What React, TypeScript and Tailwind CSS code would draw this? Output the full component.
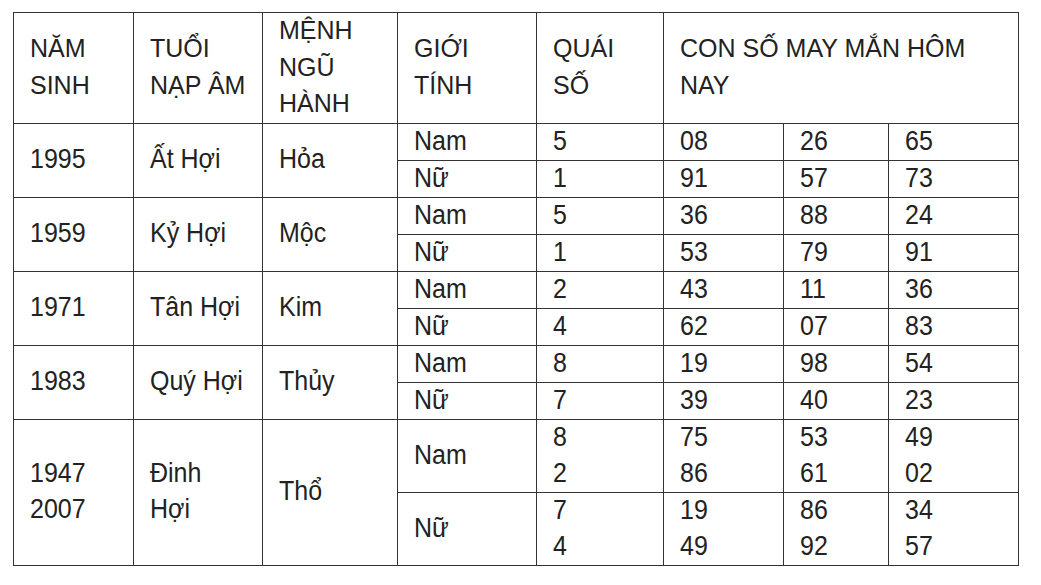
import type { ReactNode } from "react";

type Row = { gender: string; quai: string[]; nums: string[][] };
type Group = { year: string[]; tuoi: string[]; menh: string; rows: Row[] };

const groups: Group[] = [
  {
    year: ["1995"],
    tuoi: ["Ất Hợi"],
    menh: "Hỏa",
    rows: [
      { gender: "Nam", quai: ["5"], nums: [["08", "26", "65"]] },
      { gender: "Nữ", quai: ["1"], nums: [["91", "57", "73"]] },
    ],
  },
  {
    year: ["1959"],
    tuoi: ["Kỷ Hợi"],
    menh: "Mộc",
    rows: [
      { gender: "Nam", quai: ["5"], nums: [["36", "88", "24"]] },
      { gender: "Nữ", quai: ["1"], nums: [["53", "79", "91"]] },
    ],
  },
  {
    year: ["1971"],
    tuoi: ["Tân Hợi"],
    menh: "Kim",
    rows: [
      { gender: "Nam", quai: ["2"], nums: [["43", "11", "36"]] },
      { gender: "Nữ", quai: ["4"], nums: [["62", "07", "83"]] },
    ],
  },
  {
    year: ["1983"],
    tuoi: ["Quý Hợi"],
    menh: "Thủy",
    rows: [
      { gender: "Nam", quai: ["8"], nums: [["19", "98", "54"]] },
      { gender: "Nữ", quai: ["7"], nums: [["39", "40", "23"]] },
    ],
  },
  {
    year: ["1947", "2007"],
    tuoi: ["Đinh", "Hợi"],
    menh: "Thổ",
    rows: [
      {
        gender: "Nam",
        quai: ["8", "2"],
        nums: [
          ["75", "53", "49"],
          ["86", "61", "02"],
        ],
      },
      {
        gender: "Nữ",
        quai: ["7", "4"],
        nums: [
          ["19", "86", "34"],
          ["49", "92", "57"],
        ],
      },
    ],
  },
];

/* header cells: normal glyph shape */
function Th({ lines, colSpan }: { lines: string[]; colSpan?: number }) {
  return (
    <th
      colSpan={colSpan}
      className="border border-[#333] pl-4 pr-1 py-0 text-left align-middle font-normal leading-[36.5px]"
    >
      {lines.map((l, i) => (
        <div key={i} className="-translate-y-px">
          {l}
        </div>
      ))}
    </th>
  );
}

/* body cells: text in the shot is drawn a bit taller than wide */
function Td({ lines, rowSpan }: { lines: ReactNode[]; rowSpan?: number }) {
  return (
    <td rowSpan={rowSpan} className="border border-[#333] pl-4 pr-1 py-0 align-middle leading-[36px]">
      {lines.map((l, i) => (
        <div key={i}>
          <span className="inline-block -translate-y-[1.5px] scale-y-[1.1]">{l}</span>
        </div>
      ))}
    </td>
  );
}

export default function App() {
  return (
    <div className="min-h-[585px] w-[1041px] bg-white pl-[13px] pt-[12px] font-['Liberation_Sans',Arial,sans-serif] text-[25px] text-[#222]">
      <table className="w-[1005px] table-fixed border-collapse">
        <colgroup>
          <col className="w-[120px]" />
          <col className="w-[129px]" />
          <col className="w-[135px]" />
          <col className="w-[139px]" />
          <col className="w-[127px]" />
          <col className="w-[120px]" />
          <col className="w-[105px]" />
          <col className="w-[130px]" />
        </colgroup>
        <thead>
          <tr className="h-[109px]">
            <Th lines={["NĂM", "SINH"]} />
            <Th lines={["TUỔI", "NẠP ÂM"]} />
            <Th lines={["MỆNH", "NGŨ", "HÀNH"]} />
            <Th lines={["GIỚI", "TÍNH"]} />
            <Th lines={["QUÁI", "SỐ"]} />
            <Th lines={["CON SỐ MAY MẮN HÔM", "NAY"]} colSpan={3} />
          </tr>
        </thead>
        <tbody>
          {groups.map((g) =>
            g.rows.map((r, ri) => (
              <tr key={g.year[0] + r.gender}>
                {ri === 0 && (
                  <>
                    <Td rowSpan={2} lines={g.year} />
                    <Td rowSpan={2} lines={g.tuoi} />
                    <Td rowSpan={2} lines={[g.menh]} />
                  </>
                )}
                <Td lines={[r.gender]} />
                <Td lines={r.quai} />
                <Td lines={r.nums.map((n) => n[0])} />
                <Td lines={r.nums.map((n) => n[1])} />
                <Td lines={r.nums.map((n) => n[2])} />
              </tr>
            ))
          )}
        </tbody>
      </table>
    </div>
  );
}
